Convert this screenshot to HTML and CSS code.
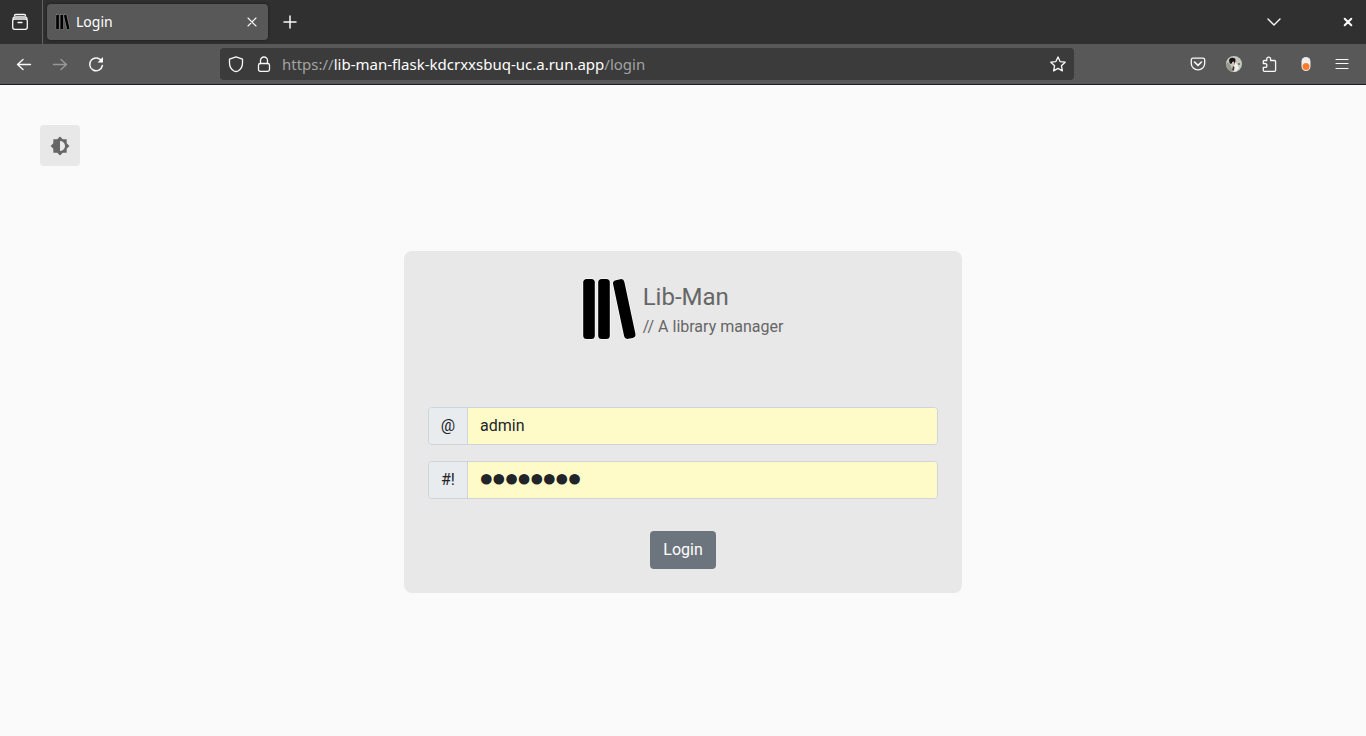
FILE: index.html
```html
<!DOCTYPE html>
<html lang="en">
<head>
<meta charset="utf-8">
<title>Login</title>
<link rel="stylesheet" href="styles.css">
</head>
<body>
<header class="browser">
  <div class="tabbar">
    <button class="view" aria-label="Firefox View"><svg width="18" height="18" viewBox="0 0 18 18"><path d="M3.500 2.500q.4-1 1.500-1h8q1.100 0 1.500 1"/><path d="M2 5.500q.4-1.500 2-1.500h10q1.600 0 2 1.500"/><rect x="1.700" y="6" width="14.600" height="10.300" rx="2"/><path d="M7 9.500h4"/></svg></button>
    <div class="tab">
      <svg class="solid" width="16" height="16" viewBox="0 0 54 60"><g stroke="#999" stroke-width="2"><rect x="0" y="2" width="13" height="56" rx="3"/><rect x="16" y="2" width="13" height="56" rx="3"/><rect x="35" y="1" width="12" height="58" rx="3" transform="rotate(-13 41 30)"/></g></svg>
      <span class="tab-title">Login</span>
      <button aria-label="Close tab"><svg width="10" height="10" viewBox="0 0 10 10"><path d="M1 1l8 8M9 1l-8 8" stroke-width="1.100"/></svg></button>
    </div>
    <button class="plus" aria-label="New tab"><svg width="14" height="14" viewBox="0 0 14 14"><path d="M7 1v12M1 7h12" stroke-width="1.500"/></svg></button>
    <div class="window-actions">
      <button aria-label="List all tabs"><svg width="14" height="8" viewBox="0 0 14 8"><path d="M1 1l6 6 6-6" stroke-width="1.400"/></svg></button>
      <button aria-label="Close window"><svg width="8" height="8" viewBox="0 0 8 8"><path d="M.7.7l6.600 6.600M7.300.7L.7 7.300" stroke-width="2"/></svg></button>
    </div>
  </div>
  <div class="toolbar">
    <div class="nav">
      <button aria-label="Back"><svg width="16" height="16" viewBox="0 0 16 16"><path d="M14.500 8.500H1.500M7 3.500L1.500 8.500 7 13.500" stroke-width="1.400"/></svg></button>
      <button class="dim" aria-label="Forward"><svg width="16" height="16" viewBox="0 0 16 16"><path d="M1.500 8.500h13M9 3.500l5.500 5L9 13.500" stroke-width="1.400"/></svg></button>
      <button aria-label="Reload"><svg width="16" height="16" viewBox="0 0 16 16"><path d="M13.800 5.400A6.400 6.400 0 1 0 14.400 9.500" stroke-width="1.500"/><path d="M15 1v5.500H9.500z" fill="#fff" stroke="none"/></svg></button>
    </div>
    <div class="address">
      <svg width="16" height="16" viewBox="0 0 16 16"><path d="M8 .8L14.500 3.200V7q0 5.500-4.500 8-2 1-4 0-4.500-2.500-4.500-8V3.200z"/></svg>
      <svg class="lock" width="14" height="16" viewBox="0 0 14 16"><path d="M3.500 7.500v-3a3.500 3.500 0 0 1 7 0v3"/><rect x="1.500" y="7.500" width="11" height="7.800" rx="1.800"/></svg>
      <span class="url">https://<b>lib-man-flask-kdcrxxsbuq-uc.a.run.app</b>/login</span>
      <button aria-label="Bookmark this page"><svg width="16" height="16" viewBox="0 0 16 16"><path d="M8 .9l2.100 4.700 5.100.6-3.800 3.500 1 5.200L8 12.400l-4.400 2.500 1-5.200L.8 6.200l5.100-.6z"/></svg></button>
    </div>
    <div class="extras">
      <button aria-label="Pocket"><svg width="16" height="16" viewBox="0 0 16 16"><path d="M3 2.200h10q1.700 0 1.700 1.700v3.500a6.700 6.400 0 0 1-13.400 0V3.900q0-1.700 1.700-1.700z"/><path d="M4.500 6L8 9.300 11.500 6" stroke-width="1.600"/></svg></button>
      <button aria-label="Account"><svg width="16" height="16" viewBox="0 0 16 16"><g stroke="none"><circle cx="8" cy="8" r="8" fill="#c5c8bc"/><path d="M0 8a8 8 0 0 0 7 8L5 10 2 6z" fill="#96998d"/><path d="M8.500 6l2.500 2 2 4-3 3.500H7z" fill="#eeefe8"/><path d="M3 4q1-3 5-2 2 .5 1.500 3L8 9 7 6 5 8Q3 7 3 4z" fill="#171316"/><path d="M6 6l2-.5.500 3L7 10z" fill="#dbbdb4"/><path d="M7 10l1.500 1L8 15l-2-1z" fill="#443d3f"/><circle cx="13" cy="8" r="1" fill="#66695d"/></g></svg></button>
      <button aria-label="Extensions"><svg width="16" height="16" viewBox="0 0 16 16"><path d="M4.800 4.500V3a1.900 1.900 0 0 1 3.800 0v1.500h4q1 0 1 1v8.800q0 1-1 1H2.300q-1 0-1-1v-3H3a1.900 1.900 0 0 0 0-3.800H1.300V5.500q0-1 1-1z"/></svg></button>
      <button aria-label="Toggle extension"><svg width="16" height="16" viewBox="0 0 16 16"><g stroke="none"><rect x="3.500" y="1" width="9" height="14" rx="4.500" fill="#eeeef0"/><circle cx="8" cy="10.500" r="3.500" fill="#ff7b29"/></g></svg></button>
      <button class="menu" aria-label="Menu"><svg width="14" height="14" viewBox="0 0 14 14"><path d="M1 2.500h12M1 6.500h12M1 11.500h12" stroke-width="1.200"/></svg></button>
    </div>
  </div>
</header>
<main class="page">
  <button class="theme" aria-label="Toggle theme"><svg width="20" height="20" viewBox="0 0 24 24"><path d="M20 8.690V4h-4.690L12 .69 8.690 4H4v4.690L.69 12 4 15.310V20h4.690L12 23.310 15.310 20H20v-4.690L23.310 12 20 8.690zM12 18V6c3.310 0 6 2.690 6 6s-2.690 6-6 6z" fill="#666" stroke="none"/></svg></button>
  <form class="card">
    <div class="brand">
      <svg class="solid" width="54" height="62" viewBox="0 0 54 62"><g stroke="#f8f8f8" stroke-width="1.600" paint-order="stroke"><rect x=".2" y="1" width="11.600" height="60" rx="3.500"/><rect x="15.200" y="1" width="11.600" height="60" rx="3.500"/><rect x="35.500" y="1" width="11.500" height="60" rx="3.500" transform="rotate(-12 41.500 31)"/></g></svg>
      <div>
        <h1 class="name">Lib-Man</h1>
        <p class="tagline">// A library manager</p>
      </div>
    </div>
    <div class="group"><label for="user">@</label><input id="user" type="text" value="admin"></div>
    <div class="group"><label for="pass">#!</label><input id="pass" class="secret" type="password" value="password"></div>
    <button class="submit" type="button">Login</button>
  </form>
</main>
</body>
</html>
```
FILE: styles.css
```css
* { box-sizing: border-box; }
body { margin: 0; min-height: 100vh; background: #fafafa; font: 16px/24px Roboto, sans-serif; }
button { margin: 0; padding: 0; border: 0; background: none; color: inherit; font: inherit; display: flex; align-items: center; justify-content: center; }
svg { display: block; flex: none; overflow: visible; fill: none; stroke: #f8f8f8; stroke-width: 1.3; stroke-linejoin: round; stroke-linecap: round; }
.solid { fill: #000; }
.browser { color: #fff; font: 15px/20px "Noto Sans", sans-serif; border-bottom: 1px solid #1c1b22; }
.tabbar { height: 44px; display: flex; align-items: center; background: #303030; }
.view { width: 43px; height: 44px; padding-right: 2px; border-right: 1px solid #626262; }
.tab { width: 221px; height: 36px; margin-left: 4px; padding: 0 11px 0 8px; display: flex; align-items: center; border-radius: 4px; background: #585858; box-shadow: 0 0 3px #181818; }
.tab-title { flex: 1; margin-left: 5px; font-size: 14px; }
.plus { width: 44px; height: 36px; }
.window-actions { margin-left: auto; padding-right: 14px; display: flex; align-items: center; gap: 63px; }
.toolbar { height: 40px; display: flex; align-items: center; background: #585858; }
.nav { width: 220px; padding-left: 16px; display: flex; gap: 20px; }
.dim { opacity: .4; }
.address { flex: 1; height: 32px; padding: 0 8px; display: flex; align-items: center; border-radius: 4px; background: #3b3b3b; }
.lock { margin: 0 11px 0 13px; }
.url { flex: 1; color: #a3a3a3; }
.url b { color: #fff; font-weight: 400; }
.extras { width: 292px; padding-right: 16px; display: flex; align-items: center; justify-content: flex-end; gap: 20px; }
.menu { width: 16px; }
.page { padding: 40px; color: #666; }
.theme { width: 40px; height: 41px; border-radius: 4px; background: #e8e8e8; }
.card { max-width: 558px; margin: 85px auto 0; padding: 24px; border-radius: 8px; background: #e8e8e8; }
.brand { display: flex; justify-content: center; align-items: center; gap: 6px; height: 68px; margin-bottom: 64px; }
.name { margin: 4px 0; font-size: 24px; line-height: 28px; font-weight: 400; }
.tagline { margin: 0; }
.group { display: flex; height: 38px; margin-bottom: 16px; color: #212529; border: 1px solid #ced4da; border-radius: 4px; overflow: hidden; }
.group label { width: 39px; display: flex; align-items: center; justify-content: center; background: #e9ecef; border-right: 1px solid #ced4da; }
.group input { flex: 1; min-width: 0; padding: 0 12px; border: 0; outline: 0; background: #fffbc8; color: #212529; font: inherit; }
.group .secret { font: 36px/36px "Liberation Serif", serif; -webkit-text-stroke: 2px #212529; }
.submit { margin: 32px auto 0; padding: 7px 13px; border-radius: 4px; background: #6c757d; color: #fff; }
```
